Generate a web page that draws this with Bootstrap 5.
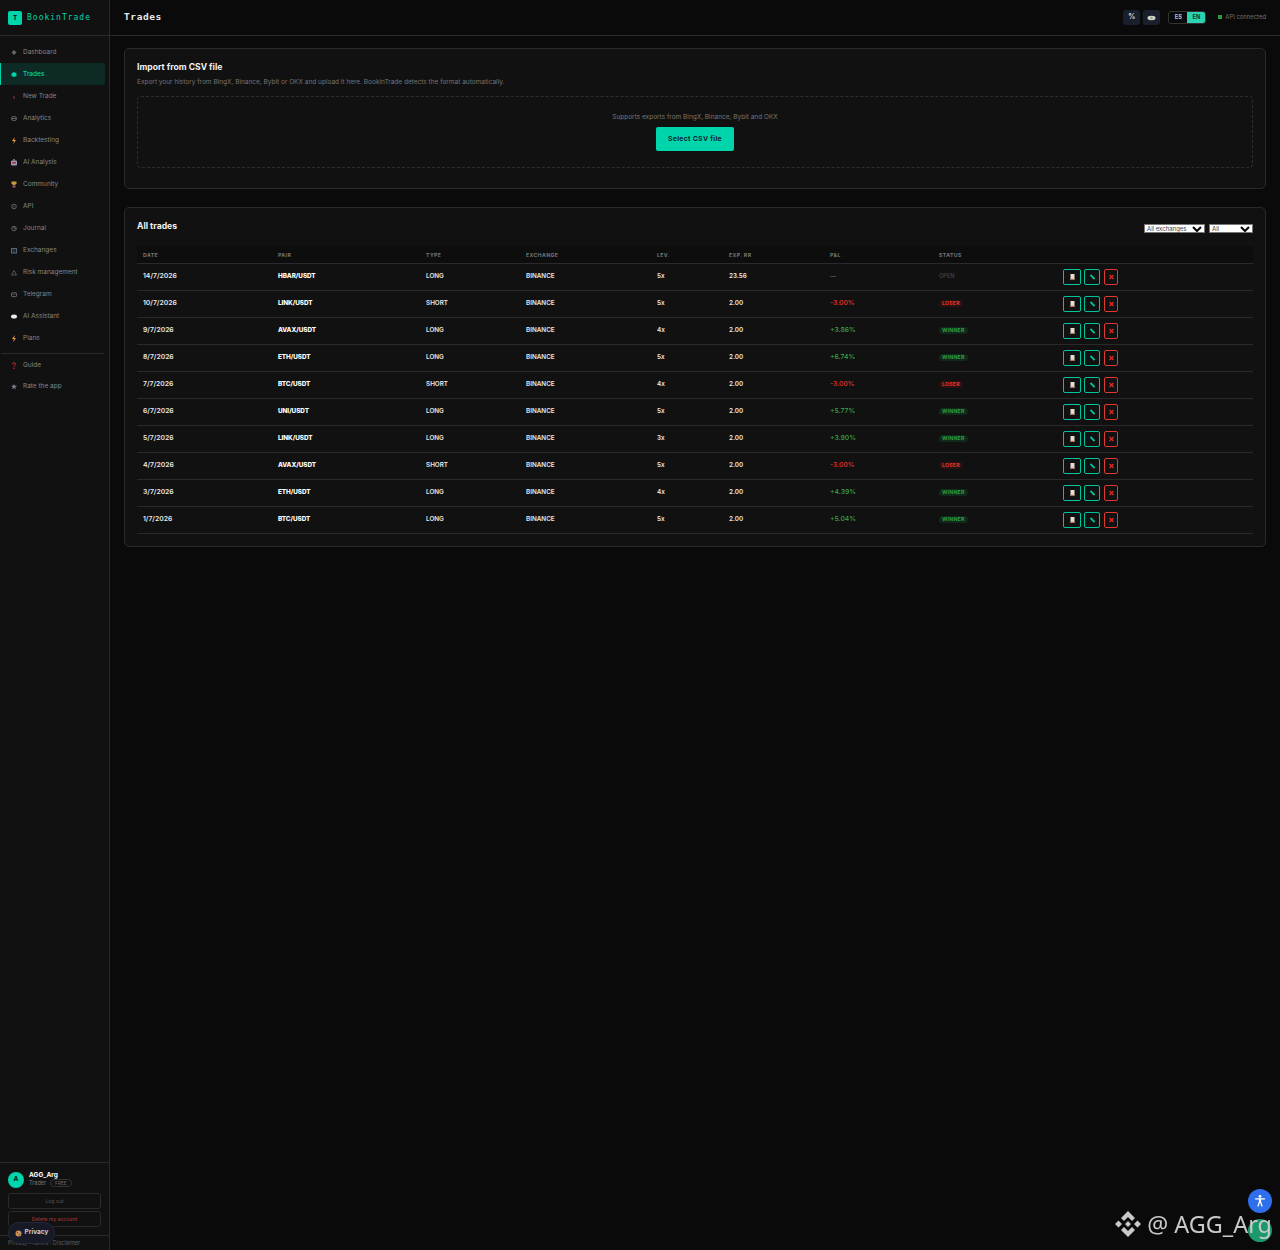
<!DOCTYPE html>
<html lang="en"><head><meta charset="utf-8"><title>Trades</title>
<link href="https://cdn.jsdelivr.net/npm/bootstrap@5.3.0/dist/css/bootstrap.min.css" rel="stylesheet">
<style>
html,body{height:1250px;overflow:hidden}
body{background:#0a0a0a;color:#e8e8e8;font-family:Inter,"Liberation Sans",sans-serif;font-size:7px}
.shell{height:1250px}
.side{width:110px;background:#111;border-right:1px solid #2a2a2a;flex:none}
.brandbar{height:36px;padding:0 8px;border-bottom:1px solid #2a2a2a;gap:5px;flex:none}
.logo{width:14px;height:14px;background:#00d4aa;color:#0a0a0a;border-radius:2px;font:700 7px "DejaVu Sans Mono",monospace}
.brandname{font:8px "DejaVu Sans Mono",monospace;letter-spacing:1px;color:#00d4aa}
.menu{padding-top:5px}
.mi{height:22px;padding:2px 5px 0 10px;margin-right:4px;color:#858585;font-size:6.5px;gap:6px;border-left:1px solid transparent;border-radius:0 3px 3px 0}
.mi.on{background:#0e2a24;color:#00d4aa;border-left-color:#00d4aa;font-weight:500}
.mi svg{width:6px;height:7px;flex:none;margin-top:-2px}
.mi.lo{height:21px;padding-top:0}
.mi.lo svg{margin-top:0}
.rule{border-top:1px solid #2a2a2a;margin:4px 5px 1px 1px}
.userbox{border-top:1px solid #2a2a2a;padding:9px 8px 0;height:88px;flex:none;position:relative}
.avatar{width:16px;height:16px;border-radius:50%;background:#00d4aa;color:#0a0a0a;font-size:6.5px;font-weight:700;flex:none}
.uinfo{margin-left:1px}
.uname{font-size:6.5px;font-weight:700;color:#fff;line-height:8px;margin-top:-2px}
.urole{font-size:5.5px;color:#777}
.freep{font-size:4.8px;color:#666;border:1px solid #333;border-radius:8px;padding:0 4px;line-height:6px;margin-left:4px}
.sbtn{display:block;width:93px;height:16px;padding:0;background:transparent;border:1px solid #2a2a2a;border-radius:3px;font-size:5.1px;line-height:14px;color:#555;margin-top:5px}
.sbtn.del{color:#a03030;margin-top:2px;font-weight:500}
.legal{position:absolute;left:0;right:0;top:72px;border-top:1px solid #2a2a2a;padding:3px 8px 0;font-size:5.5px;color:#5f5f5f;white-space:nowrap}
.privacy{position:absolute;left:8px;top:59px;width:47px;height:22px;border-radius:11px;background:#171a26;border:1px solid #242838;color:#ccc;font-size:6.5px;font-weight:700;gap:3px;justify-content:center}
.topbar{height:36px;border-bottom:1px solid #2a2a2a;padding:0 14px;flex:none}
.ptitle{font:700 9.5px "DejaVu Sans Mono",monospace;letter-spacing:.6px;color:#e8e8e8;margin:-2px 0 0}
.ic{width:17px;height:15px;background:#1a1f2e;border-radius:3px;margin-right:3px;font-size:7px;color:#ddd}
.lang{border:1px solid #333;border-radius:3px;margin-left:5px;width:38px;height:13px;overflow:hidden;font-size:5.6px;font-weight:700}
.lang span{flex:1;text-align:center;line-height:11px;color:#b8c0c8}
.lang .cur{background:#2bd3b0;color:#0a3a33}
.api{font-size:5.9px;color:#707070;margin-left:12px;gap:3px}
.api i{display:block;width:4px;height:4px;background:#2a9d3a}
.pane{padding:12px 14px 0}
.panel{background:#111;border:1px solid #2a2a2a;border-radius:5px;padding:12px 12px 0;color:#e8e8e8}
.panel.one{height:141px;margin-bottom:18px}
.panel.two{height:340px}
.ptit{font-size:8.6px;font-weight:700;color:#f2f2f2;margin:0;line-height:12px}
.psub{font-size:6.5px;color:#757575;margin:4px 0 0;line-height:10px}
.drop{height:72px;margin-top:9px;border:1px dashed #2e2e2e;border-radius:4px;padding-top:15px}
.drop p{font-size:6.5px;color:#757575;margin:0 0 5px;line-height:10px}
.csvbtn{width:78px;height:24px;padding:0;background:#00d4aa;border:0;border-radius:2px;color:#0a2530;font-size:6.85px;font-weight:700;letter-spacing:.3px}
.thead2{height:26px}
.sel{width:61px;height:9px;background:#fff;border:1px solid #777;color:#444;font-size:6px;line-height:7px;padding:0 2px;margin-left:4px;justify-content:space-between}
.sel.b{width:44px}
.sel svg{width:10px;height:6px}
.tb{table-layout:fixed;width:1116px;margin:0;--bs-table-bg:transparent;--bs-table-color:#e8e8e8;--bs-table-border-color:#2a2a2a;border-collapse:collapse}
.tb th{height:17px;padding:3px 6px 0;background:#0d0d0d;font-size:5.15px;font-weight:700;letter-spacing:.4px;color:#777;border-bottom:1px solid #2a2a2a;vertical-align:middle;text-transform:uppercase}
.tb td{height:27px;padding:0 6px;font-size:6.35px;font-weight:600;color:#e8e8e8;border-bottom:1px solid #2a2a2a;vertical-align:middle;white-space:nowrap}
.tb th:nth-child(1){width:135px}.tb th:nth-child(2){width:148px}.tb th:nth-child(3){width:100px}.tb th:nth-child(4){width:131px}.tb th:nth-child(5){width:72px}.tb th:nth-child(6){width:101px}.tb th:nth-child(7){width:109px}.tb th:nth-child(8){width:124px}
.tb td.dt{font-size:6.8px}
.tb td.pr{font-weight:800;color:#fff;letter-spacing:-.05px}
.tb td.gn{color:#3aa34a;font-weight:500;font-size:6.8px}
.tb td.rd{color:#e0342e;font-weight:500;font-size:6.8px}
.tb td.dash{color:#556}
.open{color:#44474c;font-size:5.6px;font-weight:500}
.tag{display:inline-block;font-size:5.2px;font-weight:700;border-radius:5px;padding:0 3px;line-height:7px;letter-spacing:.2px}
.tag.w{background:#10291a;color:#2f9b45}
.tag.l{background:#2c1111;color:#e0342e}
.acts{gap:3px}
.ab{display:flex;align-items:center;justify-content:center;width:18px;height:16px;padding:0;border:1px solid #00c49e;border-radius:2px;background:transparent}
.ab.c{width:16px}
.ab.x{width:14px;border-color:#e0392e;margin-left:1px}
.ab svg{width:5px;height:6px;display:block}
.wm{position:fixed;right:8px;top:1210px;z-index:3;gap:5px;color:#c9c9c9;font-family:"Noto Sans",sans-serif;font-size:23.4px;line-height:28px;white-space:nowrap}
.wm svg{width:28px;height:28px}
.fab{position:fixed;border-radius:50%;width:24px;height:24px;left:1248px}
.fab.a{top:1189px;background:#2f6fed}
.fab.g{top:1219px;height:23px;background:#1a9a6c}
</style></head>
<body>
<div class="shell d-flex">
<aside class="side d-flex flex-column">
  <div class="brandbar d-flex align-items-center"><span class="logo d-flex align-items-center justify-content-center">T</span><span class="brandname">BookinTrade</span></div>
  <nav class="menu flex-grow-1">
    <div class="mi d-flex align-items-center"><svg viewBox="0 0 6 7"><path d="M3 1l2.500 2.500L3 6 .5 3.500z" fill="#666"/></svg>Dashboard</div>
    <div class="mi on d-flex align-items-center"><svg viewBox="0 0 6 7"><path d="M3 1l2.500 1.500v2.500L3 6 .5 5V2.500z" fill="#00d4aa"/></svg>Trades</div>
    <div class="mi d-flex align-items-center"><svg viewBox="0 0 6 7"><path d="M3 3v3" stroke="#8a3a4a"/></svg>New Trade</div>
    <div class="mi d-flex align-items-center"><svg viewBox="0 0 6 7"><rect x=".7" y="1.500" width="4.600" height="4" rx="1.500" fill="none" stroke="#666"/><path d="M1 3.500h4" stroke="#666"/></svg>Analytics</div>
    <div class="mi d-flex align-items-center"><svg viewBox="0 0 6 7"><path d="M3.800 0 1 4h1.800L2.200 7 5 3H3.200z" fill="#e8963c"/></svg>Backtesting</div>
    <div class="mi d-flex align-items-center"><svg viewBox="0 0 6 7"><rect y="1.500" width="6" height="5" rx="1" fill="#9a9ab0"/><rect x="1" y="3" width="4" height="1.500" fill="#b02a4a"/><path d="M3 0v1.500" stroke="#ccc"/></svg>AI Analysis</div>
    <div class="mi d-flex align-items-center"><svg viewBox="0 0 6 7"><path d="M.5.500h5V2.500L4 4H2L.5 2.500z" fill="#c79a3a"/><rect x="1.500" y="4.500" width="3" height="2" fill="#a0607a"/></svg>Community</div>
    <div class="mi d-flex align-items-center"><svg viewBox="0 0 6 7"><circle cx="3" cy="3.500" r="2.300" fill="none" stroke="#666"/><circle cx="3" cy="3.500" r=".7" fill="#666"/></svg>API</div>
    <div class="mi d-flex align-items-center"><svg viewBox="0 0 6 7"><circle cx="3" cy="3.500" r="2.300" fill="none" stroke="#666"/><path d="M3 2v1.500h1.500" stroke="#666" fill="none"/></svg>Journal</div>
    <div class="mi d-flex align-items-center"><svg viewBox="0 0 6 7"><rect x=".5" y="1.500" width="5" height="4.500" fill="none" stroke="#56687a"/><path d="M2.200 1.500v4.500M3.800 1.500v4.500" stroke="#56687a" stroke-width=".6"/></svg>Exchanges</div>
    <div class="mi d-flex align-items-center"><svg viewBox="0 0 6 7"><path d="M3 1.500 5.500 6H.5z" fill="none" stroke="#667" stroke-width=".8"/></svg>Risk management</div>
    <div class="mi d-flex align-items-center"><svg viewBox="0 0 6 7"><rect x=".5" y="1.800" width="5" height="3.800" rx=".8" fill="none" stroke="#667"/><path d="M.8 2.500 3 4l2.200-1.500" stroke="#667" fill="none" stroke-width=".6"/></svg>Telegram</div>
    <div class="mi d-flex align-items-center"><svg viewBox="0 0 6 7"><ellipse cx="3" cy="3.500" rx="3" ry="2" fill="#eee"/></svg>AI Assistant</div>
    <div class="mi d-flex align-items-center"><svg viewBox="0 0 6 7"><path d="M3.800 0 1 4h1.800L2.200 7 5 3H3.200z" fill="#e8963c"/></svg>Plans</div>
    <div class="rule"></div>
    <div class="mi lo d-flex align-items-center"><svg viewBox="0 0 6 7"><path d="M1.500 2.300c0-2 3-2 3 0 0 1-1.500 1-1.500 2.200" fill="none" stroke="#e0303a"/><circle cx="3" cy="6.200" r=".7" fill="#e0303a"/></svg>Guide</div>
    <div class="mi lo d-flex align-items-center"><svg viewBox="0 0 6 7"><path d="m3 .8.8 2H6L4.200 4.200l.7 2.200L3 5.100 1.100 6.400l.7-2.200L0 2.800h2.200z" fill="#7a8090"/></svg>Rate the app</div>
  </nav>
  <div class="userbox">
    <div class="d-flex align-items-center gap-1">
      <span class="avatar d-flex align-items-center justify-content-center">A</span>
      <div class="uinfo"><div class="uname">AGG_Arg</div><div class="d-flex align-items-center"><span class="urole">Trader</span><span class="freep">FREE</span></div></div>
    </div>
    <button class="btn sbtn" type="button">Log out</button>
    <button class="btn sbtn del" type="button">Delete my account</button>
    <div class="legal">Privacy · Terms · Disclaimer</div>
    <div class="privacy d-flex align-items-center"><svg width="7" height="7" viewBox="0 0 7 7"><circle cx="3.500" cy="3.500" r="3" fill="#c9915a"/><circle cx="2.500" cy="2.500" r=".6" fill="#5a3a20"/><circle cx="4.500" cy="4.300" r=".6" fill="#5a3a20"/></svg>Privacy</div>
  </div>
</aside>
<main class="flex-grow-1 d-flex flex-column">
  <header class="topbar d-flex align-items-center justify-content-between">
    <h1 class="ptitle">Trades</h1>
    <div class="d-flex align-items-center">
      <span class="ic d-flex align-items-center justify-content-center fw-bold">%</span>
      <span class="ic d-flex align-items-center justify-content-center"><svg width="9" height="6" viewBox="0 0 9 6"><ellipse cx="4.500" cy="3" rx="4" ry="2.200" fill="#cdd6e0"/><circle cx="4.500" cy="3" r="1.300" fill="#c09a40"/></svg></span>
      <div class="lang d-flex"><span>ES</span><span class="cur">EN</span></div>
      <div class="api d-flex align-items-center"><i></i>API connected</div>
    </div>
  </header>
  <div class="pane">
    <section class="card panel one">
      <h2 class="ptit">Import from CSV file</h2>
      <p class="psub">Export your history from BingX, Binance, Bybit or OKX and upload it here. BookinTrade detects the format automatically.</p>
      <div class="drop text-center">
        <p>Supports exports from BingX, Binance, Bybit and OKX</p>
        <button class="btn csvbtn" type="button">Select CSV file</button>
      </div>
    </section>
    <section class="card panel two">
      <div class="thead2 d-flex justify-content-between">
        <h2 class="ptit">All trades</h2>
        <div class="d-flex pt-1">
          <div class="sel d-flex align-items-center">All exchanges<svg viewBox="0 0 10 6"><path d="M1 1l4 4 4-4" fill="none" stroke="#000" stroke-width="2"/></svg></div>
          <div class="sel b d-flex align-items-center">All<svg viewBox="0 0 10 6"><path d="M1 1l4 4 4-4" fill="none" stroke="#000" stroke-width="2"/></svg></div>
        </div>
      </div>
      <table class="table tb"><thead><tr><th>Date</th><th>Pair</th><th>Type</th><th>Exchange</th><th>Lev.</th><th>Exp. RR</th><th>P&amp;L</th><th>Status</th><th></th></tr></thead>
      <tbody id="rows"></tbody></table>
    </section>
  </div>
</main>
</div>
<div class="wm d-flex align-items-center"><svg viewBox="0 0 28 28"><path fill="#c9c9c9" d="M14 1l7 7-3 3-4-4-4 4-3-3zM14 27l7-7-3-3-4 4-4-4-3 3zM1 14l3.500-3.500L8 14l-3.500 3.500zM20 14l3.500-3.500L27 14l-3.500 3.500zM14 11l3 3-3 3-3-3z"/></svg><span>@ AGG_Arg</span></div>
<div class="fab a d-flex align-items-center justify-content-center"><svg width="14" height="14" viewBox="0 0 14 14"><circle cx="7" cy="2.400" r="1.400" fill="#fff"/><path d="M2.500 4.800h9" stroke="#fff" stroke-width="1.300" stroke-linecap="round"/><path d="M7 4.800V8" stroke="#fff" stroke-width="2.200"/><path d="M6.500 8 5 12M7.500 8 9 12" stroke="#fff" stroke-width="1.300" stroke-linecap="round"/></svg></div>
<div class="fab g"></div>
<script>
var d=[["14/7/2026","HBAR/USDT","LONG","5x","23.56","—",""],["10/7/2026","LINK/USDT","SHORT","5x","2.00","-3.00%","l"],["9/7/2026","AVAX/USDT","LONG","4x","2.00","+3.86%","w"],["8/7/2026","ETH/USDT","LONG","5x","2.00","+6.74%","w"],["7/7/2026","BTC/USDT","SHORT","4x","2.00","-3.00%","l"],["6/7/2026","UNI/USDT","LONG","5x","2.00","+5.77%","w"],["5/7/2026","LINK/USDT","LONG","3x","2.00","+3.90%","w"],["4/7/2026","AVAX/USDT","SHORT","5x","2.00","-3.00%","l"],["3/7/2026","ETH/USDT","LONG","4x","2.00","+4.39%","w"],["1/7/2026","BTC/USDT","LONG","5x","2.00","+5.04%","w"]];
var ab='<div class="d-flex acts"><button class="btn ab" type="button"><svg viewBox="0 0 5 6"><rect x=".5" width="4" height="6" fill="#e8dcd0"/><rect x=".5" y="4.800" width="4" height="1.200" fill="#b07060"/></svg></button><button class="btn ab c" type="button"><svg viewBox="0 0 5 6"><path d="M.5 1 4.500 5" stroke="#00c49e" stroke-width="1.800"/></svg></button><button class="btn ab x" type="button"><svg viewBox="0 0 5 6"><path d="M.5 1 4.500 5M4.500 1 .5 5" stroke="#d42a22" stroke-width="1.500"/></svg></button></div>';
document.getElementById("rows").innerHTML=d.map(function(r){var c=r[6]=="w"?"gn":r[6]=="l"?"rd":"dash";var s=r[6]=="w"?'<span class="tag w">WINNER</span>':r[6]=="l"?'<span class="tag l">LOSER</span>':'<span class="open">OPEN</span>';return '<tr><td class="dt">'+r[0]+'</td><td class="pr">'+r[1]+"</td><td>"+r[2]+"</td><td>BINANCE</td><td>"+r[3]+"</td><td>"+r[4]+'</td><td class="'+c+'">'+r[5]+"</td><td>"+s+'</td><td>'+ab+"</td></tr>"}).join("");
</script>
</body></html>
